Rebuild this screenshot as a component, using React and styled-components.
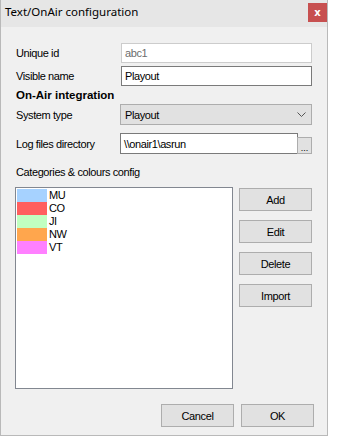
import React from 'react';
import styled, { createGlobalStyle } from 'styled-components';

const GlobalStyle = createGlobalStyle`
  html, body {
    margin: 0;
    padding: 0;
    background: #ffffff;
  }
  body {
    font-family: "Liberation Sans", Arial, sans-serif;
    font-size: 11px;
    letter-spacing: -0.4px;
    color: #000;
  }
`;

const Window = styled.div`
  width: 326px;
  height: 435px;
  border: 1px solid #b9b9b9;
  border-top: none;
  background: #f0f0f0;
  display: flex;
  flex-direction: column;
`;

const TitleBar = styled.div`
  height: 27px;
  background: #e6e6e6;
  display: flex;
  align-items: flex-start;
  justify-content: space-between;
  padding-left: 4px;
`;

const Title = styled.div`
  font-family: "Noto Sans", "Open Sans", sans-serif;
  font-size: 11.5px;
  letter-spacing: 0;
  line-height: 16px;
  padding-top: 4px;
  color: #000;
`;

const CloseButton = styled.div`
  width: 19px;
  height: 19px;
  margin-top: 3px;
  background: #c75050;
  color: #fff;
  font-family: "DejaVu Sans", sans-serif;
  font-weight: bold;
  font-size: 10px;
  letter-spacing: 0;
  display: flex;
  align-items: center;
  justify-content: center;
`;

const Body = styled.div`
  flex: 1;
  display: flex;
  flex-direction: column;
  padding: 15px 15px 0 14px;
`;

const FieldRow = styled.div`
  display: flex;
  align-items: center;
  height: ${p => p.h || 21}px;
  margin-bottom: ${p => p.mb || 0}px;
  margin-top: ${p => p.mt || 0}px;
`;

const Label = styled.div`
  width: ${p => p.w || 104}px;
  padding-left: 1px;
  flex-shrink: 0;
`;

const TextBox = styled.div`
  box-sizing: border-box;
  width: ${p => p.w || 192}px;
  height: ${p => p.h || 20}px;
  background: #fff;
  border: 1px solid ${p => (p.disabled ? '#cccccc' : '#7a7a7a')};
  color: ${p => (p.disabled ? '#6d6d6d' : '#000')};
  padding: 0 3px;
  display: flex;
  align-items: center;
`;

const SectionTitle = styled.div`
  font-weight: bold;
  font-size: 11.5px;
  letter-spacing: 0;
  padding-left: 1px;
  height: 18px;
  display: flex;
  align-items: center;
`;

const Select = styled.div`
  box-sizing: border-box;
  width: 194px;
  height: 21px;
  background: #e1e1e1;
  border: 1px solid #adadad;
  display: flex;
  align-items: center;
  justify-content: space-between;
  padding: 0 5px 0 4px;
  margin-left: -2px;
`;

const BrowseButton = styled.div`
  box-sizing: border-box;
  width: 15px;
  height: 17px;
  margin-top: 4px;
  margin-left: -1px;
  background: #e1e1e1;
  border: 1px solid #adadad;
  font-size: 9px;
  letter-spacing: 0;
  display: flex;
  align-items: flex-end;
  justify-content: center;
  line-height: 10px;
`;

const CategoriesArea = styled.div`
  display: flex;
  gap: 6px;
  margin-top: 5px;
`;

const ListBox = styled.div`
  box-sizing: border-box;
  width: 220px;
  height: 202px;
  background: #fff;
  border: 1px solid #828790;
  padding: 1px;
  display: flex;
  flex-direction: column;
`;

const ListItem = styled.div`
  display: flex;
  align-items: center;
  height: 13px;
  line-height: 13px;
`;

const Swatch = styled.div`
  width: 30px;
  height: 13px;
  background: ${p => p.color};
  margin-right: 2px;
`;

const SideButtons = styled.div`
  display: flex;
  flex-direction: column;
  gap: 9px;
  padding-top: 1px;
`;

const Button = styled.div`
  box-sizing: border-box;
  width: 73px;
  height: 23px;
  background: #e1e1e1;
  border: 1px solid #adadad;
  display: flex;
  align-items: center;
  justify-content: center;
`;

const Footer = styled.div`
  display: flex;
  justify-content: flex-end;
  gap: 7px;
  margin-top: 15px;
  margin-right: -2px;
`;

const categories = [
  { code: 'MU', color: '#a6d2ff' },
  { code: 'CO', color: '#ff5f5f' },
  { code: 'JI', color: '#c0ffc0' },
  { code: 'NW', color: '#ffa64d' },
  { code: 'VT', color: '#ff80ff' },
];

const Chevron = () => (
  <svg width="9" height="6" viewBox="0 0 9 6">
    <path d="M0.5 0.5 L4.5 4.5 L8.5 0.5" fill="none" stroke="#555" strokeWidth="1" />
  </svg>
);

export default function App() {
  return (
    <>
      <GlobalStyle />
      <Window>
        <TitleBar>
          <Title>Text/OnAir configuration</Title>
          <CloseButton>x</CloseButton>
        </TitleBar>
        <Body>
          <FieldRow mb={2}>
            <Label w={105}>Unique id</Label>
            <TextBox disabled>abc1</TextBox>
          </FieldRow>
          <FieldRow>
            <Label w={105}>Visible name</Label>
            <TextBox>Playout</TextBox>
          </FieldRow>
          <SectionTitle>On-Air integration</SectionTitle>
          <FieldRow mb={8}>
            <Label w={106}>System type</Label>
            <Select>
              <span>Playout</span>
              <Chevron />
            </Select>
          </FieldRow>
          <FieldRow mb={4}>
            <Label w={104}>Log files directory</Label>
            <TextBox w={179} h={21}>\\onair1\asrun</TextBox>
            <BrowseButton>...</BrowseButton>
          </FieldRow>
          <FieldRow mt={3}>
            <Label w={200}>Categories &amp; colours config</Label>
          </FieldRow>
          <CategoriesArea>
            <ListBox>
              {categories.map(c => (
                <ListItem key={c.code}>
                  <Swatch color={c.color} />
                  {c.code}
                </ListItem>
              ))}
            </ListBox>
            <SideButtons>
              <Button>Add</Button>
              <Button>Edit</Button>
              <Button>Delete</Button>
              <Button>Import</Button>
            </SideButtons>
          </CategoriesArea>
          <Footer>
            <Button>Cancel</Button>
            <Button>OK</Button>
          </Footer>
        </Body>
      </Window>
    </>
  );
}
